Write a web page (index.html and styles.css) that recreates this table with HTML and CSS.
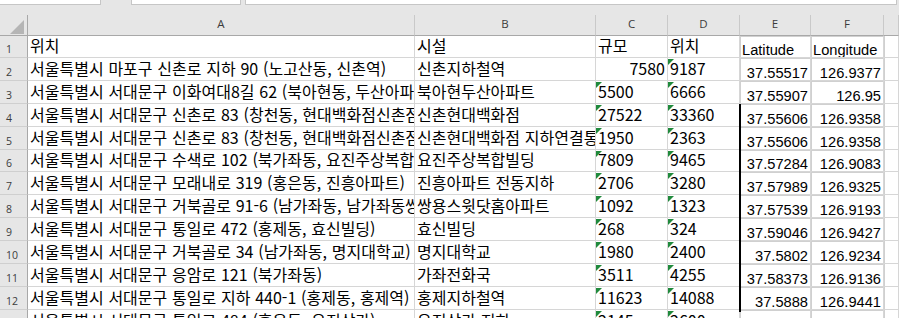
FILE: index.html
```html
<!DOCTYPE html>
<html lang="ko">
<head>
<meta charset="utf-8">
<title>Sheet</title>
<link rel="stylesheet" href="styles.css">
</head>
<body>
<div class="app">
  <div class="topbar">
    <div class="box box-name"></div>
    <div class="box box-btn"></div>
    <div class="box box-formula"></div>
  </div>
  <div class="sheet">
    <div class="ch corner"><svg width="14" height="14" viewBox="0 0 14 14"><polygon points="14,0 14,14 0,14" fill="#b5b5b5"/></svg></div>
    <div class="ch">A</div>
    <div class="ch">B</div>
    <div class="ch">C</div>
    <div class="ch">D</div>
    <div class="ch">E</div>
    <div class="ch">F</div>
    <div class="ch"></div>

    <div class="rh">1</div>
    <div class="c ko">위치</div>
    <div class="c ko">시설</div>
    <div class="c ko">규모</div>
    <div class="c ko">위치</div>
    <div class="c ar ef">Latitude</div>
    <div class="c ar ef">Longitude</div>
    <div class="c g"></div>

    <div class="rh">2</div>
    <div class="c ko">서울특별시 마포구 신촌로 지하 90 (노고산동, 신촌역)</div>
    <div class="c ko">신촌지하철역</div>
    <div class="c ko r">7580</div>
    <div class="c ko t">9187</div>
    <div class="c ar ef r">37.55517</div>
    <div class="c ar ef r">126.9377</div>
    <div class="c g"></div>

    <div class="rh">3</div>
    <div class="c ko">서울특별시 서대문구 이화여대8길 62 (북아현동, 두산아파트)</div>
    <div class="c ko">북아현두산아파트</div>
    <div class="c ko t">5500</div>
    <div class="c ko t">6666</div>
    <div class="c ar ef r">37.55907</div>
    <div class="c ar ef r">126.95</div>
    <div class="c g"></div>

    <div class="rh">4</div>
    <div class="c ko">서울특별시 서대문구 신촌로 83 (창천동, 현대백화점신촌점)</div>
    <div class="c ko">신촌현대백화점</div>
    <div class="c ko t">27522</div>
    <div class="c ko t">33360</div>
    <div class="c ar ef r">37.55606</div>
    <div class="c ar ef r">126.9358</div>
    <div class="c g"></div>

    <div class="rh">5</div>
    <div class="c ko">서울특별시 서대문구 신촌로 83 (창천동, 현대백화점신촌점)</div>
    <div class="c ko">신촌현대백화점 지하연결통로</div>
    <div class="c ko t">1950</div>
    <div class="c ko t">2363</div>
    <div class="c ar ef r">37.55606</div>
    <div class="c ar ef r">126.9358</div>
    <div class="c g"></div>

    <div class="rh">6</div>
    <div class="c ko">서울특별시 서대문구 수색로 102 (북가좌동, 요진주상복합빌딩)</div>
    <div class="c ko">요진주상복합빌딩</div>
    <div class="c ko t">7809</div>
    <div class="c ko t">9465</div>
    <div class="c ar ef r">37.57284</div>
    <div class="c ar ef r">126.9083</div>
    <div class="c g"></div>

    <div class="rh">7</div>
    <div class="c ko">서울특별시 서대문구 모래내로 319 (홍은동, 진흥아파트)</div>
    <div class="c ko">진흥아파트 전동지하</div>
    <div class="c ko t">2706</div>
    <div class="c ko t">3280</div>
    <div class="c ar ef r">37.57989</div>
    <div class="c ar ef r">126.9325</div>
    <div class="c g"></div>

    <div class="rh">8</div>
    <div class="c ko">서울특별시 서대문구 거북골로 91-6 (남가좌동, 남가좌동쌍용스윗닷홈아파트)</div>
    <div class="c ko">쌍용스윗닷홈아파트</div>
    <div class="c ko t">1092</div>
    <div class="c ko t">1323</div>
    <div class="c ar ef r">37.57539</div>
    <div class="c ar ef r">126.9193</div>
    <div class="c g"></div>

    <div class="rh">9</div>
    <div class="c ko">서울특별시 서대문구 통일로 472 (홍제동, 효신빌딩)</div>
    <div class="c ko">효신빌딩</div>
    <div class="c ko t">268</div>
    <div class="c ko t">324</div>
    <div class="c ar ef r">37.59046</div>
    <div class="c ar ef r">126.9427</div>
    <div class="c g"></div>

    <div class="rh">10</div>
    <div class="c ko">서울특별시 서대문구 거북골로 34 (남가좌동, 명지대학교)</div>
    <div class="c ko">명지대학교</div>
    <div class="c ko t">1980</div>
    <div class="c ko t">2400</div>
    <div class="c ar ef r">37.5802</div>
    <div class="c ar ef r">126.9234</div>
    <div class="c g"></div>

    <div class="rh">11</div>
    <div class="c ko">서울특별시 서대문구 응암로 121 (북가좌동)</div>
    <div class="c ko">가좌전화국</div>
    <div class="c ko t">3511</div>
    <div class="c ko t">4255</div>
    <div class="c ar ef r">37.58373</div>
    <div class="c ar ef r">126.9136</div>
    <div class="c g"></div>

    <div class="rh">12</div>
    <div class="c ko">서울특별시 서대문구 통일로 지하 440-1 (홍제동, 홍제역)</div>
    <div class="c ko">홍제지하철역</div>
    <div class="c ko t">11623</div>
    <div class="c ko t">14088</div>
    <div class="c ar ef r">37.5888</div>
    <div class="c ar ef r">126.9441</div>
    <div class="c g"></div>

    <div class="rh">13</div>
    <div class="c ko">서울특별시 서대문구 통일로 484 (홍은동, 유진상가)</div>
    <div class="c ko">유진상가 지하</div>
    <div class="c ko t">2145</div>
    <div class="c ko t">2600</div>
    <div class="c ar ef r">37.59458</div>
    <div class="c ar ef r">126.9437</div>
    <div class="c g"></div>

    <div class="edge-line"></div>
  </div>
</div>
</body>
</html>
```
FILE: styles.css
```css
html, body {
  margin: 0;
  padding: 0;
  background: #ffffff;
}

.app {
  width: 899px;
  height: 318px;
  overflow: hidden;
  background: #e6e6e6;
}

.topbar {
  height: 15px;
  display: flex;
  align-items: flex-start;
  background: #e6e6e6;
}

.box {
  box-sizing: border-box;
  height: 5px;
  background: #ffffff;
  border: 1px solid #c6c6c6;
  border-top: 0;
}

.box-name {
  width: 102px;
  margin-left: -1px;
}

.box-btn {
  margin-left: 30px;
  width: 110px;
}

.box-formula {
  margin-left: 4px;
  width: 652px;
}

.sheet {
  position: relative;
  display: grid;
  grid-template-columns: 28px 387px 181px 72px 72px 71px 73px 1fr;
  grid-template-rows: 21px 22px repeat(12, 22.9px);
  background: #ffffff;
}

.ch {
  box-sizing: border-box;
  background: #e6e6e6;
  border-right: 1px solid #c9c9c9;
  border-bottom: 1px solid #a8a8a8;
  display: flex;
  justify-content: center;
  align-items: flex-end;
  padding-bottom: 5px;
  font: 11.5px/13px "Open Sans", "Noto Sans", sans-serif;
  color: #3c3c3c;
}

.corner {
  border-right-color: #a8a8a8;
  justify-content: flex-end;
  padding: 0 3px 1px 0;
}

.corner svg {
  display: block;
}

.rh {
  box-sizing: border-box;
  background: #e6e6e6;
  border-right: 1px solid #a8a8a8;
  border-bottom: 1px solid #cfcfcf;
  display: flex;
  align-items: flex-end;
  padding: 0 0 2px 6px;
  font: 10.5px/12px "Open Sans", "Noto Sans", sans-serif;
  color: #3c3c3c;
}

.c {
  box-sizing: border-box;
  position: relative;
  border-right: 1px solid #d6d6d6;
  border-bottom: 1px solid #d6d6d6;
  overflow: hidden;
  white-space: nowrap;
  display: flex;
  align-items: flex-end;
  padding: 0 2px 4px 2px;
  color: #000000;
  background: #ffffff;
}

.ko {
  font: 16px/16px "Noto Sans CJK KR", "Noto Sans", sans-serif;
  word-spacing: 0.3px;
}

.ar {
  font: 14.67px/14px "Liberation Sans", Arial, sans-serif;
  padding: 0 2px 0 2px;
}

.ef {
  box-shadow: inset 1px 1px 0 #d0d0d0;
}

.g {
  box-shadow: inset 1px 0 0 #d0d0d0;
}

.r {
  justify-content: flex-end;
}

.t::before {
  content: "";
  position: absolute;
  left: 0;
  top: 1px;
  width: 0;
  height: 0;
  border-top: 6px solid #208a3c;
  border-right: 6px solid transparent;
}

.edge-line {
  position: absolute;
  left: 739px;
  top: 89px;
  width: 2px;
  height: 208px;
  background: #000000;
}
```
